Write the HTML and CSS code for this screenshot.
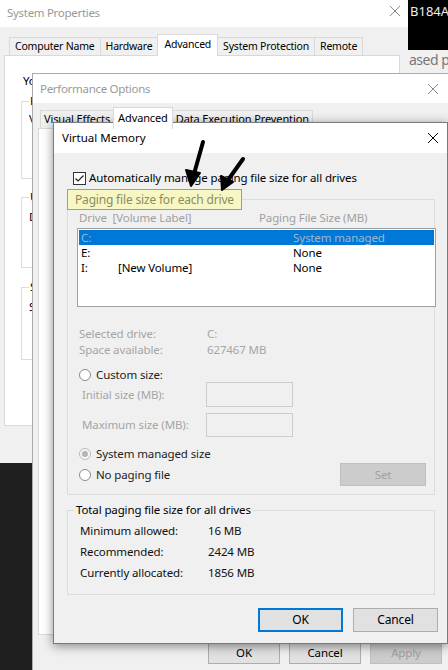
FILE: index.html
```html
<!DOCTYPE html>
<html>
<head>
<meta charset="utf-8">
<link rel="stylesheet" href="styles.css">
</head>
<body>
<div class="desktop">
  <div class="term">
    <div class="term-line">B184A9</div>
  </div>
  <div class="term-low">ased pr</div>

  <section class="win win-sys">
    <header class="titlebar">
      <span class="title">System Properties</span>
      <svg class="close" width="12" height="12" viewBox="0 0 12 12"><path d="M1 1L11 11M11 1L1 11" stroke="#8a8a8a" stroke-width="1"/></svg>
    </header>
    <div class="tabs sys-tabs">
      <span class="tab">Computer Name</span>
      <span class="tab">Hardware</span>
      <span class="tab active">Advanced</span>
      <span class="tab">System Protection</span>
      <span class="tab">Remote</span>
    </div>
    <div class="panel sys-panel">
      <p class="note">You must be logged on as an Administrator to make most of these changes.</p>
      <fieldset class="sgrp sg1"><legend>Performance</legend><p>Visual effects, processor scheduling, memory usage, and virtual memory</p></fieldset>
      <fieldset class="sgrp sg2"><legend>User Profiles</legend><p>Desktop settings related to your sign-in</p></fieldset>
      <fieldset class="sgrp sg3"><legend>Startup and Recovery</legend><p>System startup, system failure, and debugging information</p></fieldset>
    </div>
  </section>

  <section class="win win-perf">
    <header class="titlebar">
      <span class="title">Performance Options</span>
      <svg class="close" width="12" height="12" viewBox="0 0 12 12"><path d="M1 1L11 11M11 1L1 11" stroke="#8a8a8a" stroke-width="1"/></svg>
    </header>
    <div class="tabs perf-tabs">
      <span class="tab">Visual Effects</span>
      <span class="tab active">Advanced</span>
      <span class="tab">Data Execution Prevention</span>
    </div>
    <div class="panel perf-panel"></div>
    <div class="btnrow perf-btns">
      <span class="btn">OK</span>
      <span class="btn">Cancel</span>
      <span class="btn disabled">Apply</span>
    </div>
  </section>

  <section class="win win-vm">
    <header class="titlebar vm-title">
      <span class="title">Virtual Memory</span>
      <svg class="close" width="12" height="12" viewBox="0 0 12 12"><path d="M1 1L11 11M11 1L1 11" stroke="#000" stroke-width="1"/></svg>
    </header>
    <div class="vm-body">
      <label class="check-row">
        <svg class="checkbox" width="13" height="13" viewBox="0 0 13 13"><rect x="0.5" y="0.5" width="12" height="12" fill="#fff" stroke="#333"/><path d="M2.5 6.5L5 9L10.5 3.5" fill="none" stroke="#222" stroke-width="1.2"/></svg>
        <span>Automatically manage paging file size for all drives</span>
      </label>

      <fieldset class="grp grp-drive">
        <legend class="hl">Paging file size for each drive</legend>
        <div class="cols hdr"><span class="c1">Drive&nbsp; [Volume Label]</span><span class="c2">Paging File Size (MB)</span></div>
        <div class="listbox">
          <div class="lrow sel"><span class="d">C:</span><span class="v"></span><span class="s">System managed</span></div>
          <div class="lrow"><span class="d">E:</span><span class="v"></span><span class="s">None</span></div>
          <div class="lrow"><span class="d">I:</span><span class="v">[New Volume]</span><span class="s">None</span></div>
        </div>
        <div class="info first"><span class="k">Selected drive:</span><span>C:</span></div>
        <div class="info"><span class="k">Space available:</span><span>627467 MB</span></div>
        <div class="radio-row custom"><span class="radio"></span><span>Custom size:</span></div>
        <div class="size-row r1"><span class="k">Initial size (MB):</span><span class="tbox"></span></div>
        <div class="size-row r2"><span class="k">Maximum size (MB):</span><span class="tbox"></span></div>
        <div class="radio-row sysm"><span class="radio checked"></span><span>System managed size</span></div>
        <div class="last-row">
          <div class="radio-row nopf"><span class="radio"></span><span>No paging file</span></div>
          <span class="btn disabled set">Set</span>
        </div>
      </fieldset>

      <fieldset class="grp grp-total">
        <legend>Total paging file size for all drives</legend>
        <div class="trow"><span class="k">Minimum allowed:</span><span>16 MB</span></div>
        <div class="trow"><span class="k">Recommended:</span><span>2424 MB</span></div>
        <div class="trow"><span class="k">Currently allocated:</span><span>1856 MB</span></div>
      </fieldset>

      <div class="btnrow vm-btns">
        <span class="btn default">OK</span>
        <span class="btn">Cancel</span>
      </div>
    </div>
  </section>

  <svg class="arrows" width="448" height="670" viewBox="0 0 448 670">
    <path d="M203 142 L194 174" stroke="#000" stroke-width="4" stroke-linecap="round"/>
    <path d="M186 170 L191 186 L200 173 Z" fill="#000" stroke="#000" stroke-width="2" stroke-linejoin="round"/>
    <path d="M243 159 L228 180" stroke="#000" stroke-width="4" stroke-linecap="round"/>
    <path d="M221 176 L222 190 L233 182 Z" fill="#000" stroke="#000" stroke-width="2" stroke-linejoin="round"/>
  </svg>
</div>
</body>
</html>
```

FILE: styles.css
```css
* { box-sizing: border-box; }
html, body { margin: 0; padding: 0; }
body {
  width: 448px;
  height: 670px;
  overflow: hidden;
  background: #1e1e1e;
  font-family: "Noto Sans", "Open Sans", sans-serif;
  font-size: 11.5px;
  letter-spacing: -0.12px;
  line-height: 16px;
  color: #000;
}
.desktop { position: relative; width: 448px; height: 670px; overflow: hidden; }

.term {
  position: absolute; left: 408px; top: 0; width: 40px; height: 50px;
  background: #000; color: #eee; font-size: 13px; padding: 3px 0 0 2px;
  letter-spacing: 0;
}
.term-low {
  position: absolute; left: 404px; top: 50px; width: 44px; height: 24px;
  background: #f0f0f0; color: #777; font-size: 14px; padding: 2px 0 0 5px;
  letter-spacing: -0.5px; white-space: nowrap; overflow: hidden;
}

.win { position: absolute; background: #f0f0f0; }
.titlebar {
  background: #fff;
  display: flex; align-items: center; justify-content: space-between;
  color: #999;
  font-size: 11.5px;
  letter-spacing: -0.3px;
}
.titlebar .close { flex: none; }

/* System Properties */
.win-sys { left: 0; top: 0; width: 408px; height: 463px; }
.win-sys .titlebar { height: 27px; padding: 0 8px 2px 7px; }
.win-sys .titlebar .close { margin-right: -1px; margin-top: -4px; }
.tabs { display: flex; align-items: flex-end; }
.tab {
  background: #f0f0f0; border: 1px solid #d9d9d9; border-bottom: none;
  height: 18px; line-height: 16px; padding: 0 3px; margin-right: -1px; white-space: nowrap;
}
.tab.active { background: #fff; height: 22px; line-height: 19px; position: relative; z-index: 1; margin-bottom: -1px; padding: 0 4px; }
.sys-tabs { height: 28px; padding-left: 9px; font-size: 10.5px; letter-spacing: -0.2px; }
.sys-tabs .tab { padding: 0 5px; }
.sys-tabs .tab.active { padding: 0 6px; }
.sys-panel {
  background: #fff; border: 1px solid #d9d9d9;
  margin: 0 8px 0 4px; height: 371px; padding: 17px 0 0 16px;
}
.note { margin: 0 0 4px 2px; white-space: nowrap; }
.sgrp {
  border: 1px solid #dcdcdc; margin: 0 0 0 0; padding: 0 0 0 7px; width: 370px;
}
.sgrp legend { padding: 0 1px; margin-left: 0; }
.sgrp p { margin: 2px 0 0 0; white-space: nowrap; }
.sg1 { height: 86px; margin-top: 0; }
.sg2 { height: 79px; margin-top: 10px; }
.sg3 { height: 81px; margin-top: 11px; }
.sg2 p, .sg3 p { margin-top: 4px; }

/* Performance Options */
.win-perf { left: 32px; top: 73px; width: 425px; height: 610px; border: 1px solid #aaa; }
.win-perf .titlebar { height: 29px; padding: 0 17px 0 7px; }
.perf-tabs { height: 25px; padding-left: 7px; font-size: 11px; }
.perf-panel { background: #fff; border: 1px solid #d9d9d9; margin: 0 6px 0 5px; height: 507px; }
.btnrow { display: flex; justify-content: flex-end; }
.btn {
  display: inline-flex; align-items: center; justify-content: center;
  background: #e1e1e1; border: 1px solid #adadad; color: #000;
}
.btn.disabled { background: #cccccc; border-color: #bfbfbf; color: #a0a0a0; }
.perf-btns { margin-top: 6px; gap: 9px; padding-right: 14px; }
.perf-btns .btn { width: 72px; height: 23px; }

/* Virtual Memory */
.win-vm {
  left: 53px; top: 122px; width: 395px; height: 522px;
  border: 1px solid #7a7a7a;
  box-shadow: 0 2px 10px rgba(0,0,0,0.45);
}
.vm-title { height: 30px; padding: 0 8px 0 8px; color: #000; letter-spacing: 0; }
.vm-body { padding: 17px 12px 0 13px; }
.check-row { display: flex; align-items: center; height: 16px; padding-left: 6px; gap: 3px; }
.checkbox { flex: none; }

.grp { border: 1px solid #dcdcdc; margin: 0; min-width: 0; }
.grp-drive { margin-top: 3px; padding: 0 0 8px 11px; }
.hl {
  margin-left: -12px;
  background: #f7f7c4; border: 1px solid #a3a36e;
  color: #8c8c62; line-height: 19px; padding: 0 7px 0 7px;
  font-size: 12px; letter-spacing: -0.18px;
}
.cols { display: flex; color: #a0a0a0; line-height: 15px; height: 15px; }
.cols .c1 { width: 180px; }
.listbox {
  margin: 3px -2px 0 -2px; height: 79px; background: #fff;
  border: 1px solid #a0a0a0; padding: 1px;
}
.lrow { display: flex; height: 15px; line-height: 15px; padding-left: 2px; white-space: nowrap; }
.lrow .d { width: 37px; }
.lrow .v { width: 175px; }
.lrow.sel { background: #0078d7; color: #9fb7cc; }
.info { display: flex; color: #a5a5a5; height: 16px; }
.info.first { margin-top: 19px; }
.info .k { width: 128px; }
.radio-row { display: flex; align-items: center; height: 16px; gap: 5px; color: #222; }
.radio {
  width: 12px; height: 12px; border-radius: 50%; border: 1px solid #8a8a8a; background: #fff; flex: none;
  display: inline-flex; align-items: center; justify-content: center;
}
.radio.checked { border-color: #bcbcbc; background: #f5f5f5; }
.radio.checked::after { content: ""; width: 6px; height: 6px; border-radius: 50%; background: #b5b5b5; }
.custom { margin-top: 9px; }
.size-row { display: flex; align-items: center; color: #a5a5a5; padding-left: 3px; }
.size-row .k { width: 124px; }
.tbox { width: 87px; background: #f0f0f0; border: 1px solid #cccccc; }
.r1 { margin-top: -1px; height: 25px; }
.r1 .tbox { height: 25px; }
.r2 { margin-top: 6px; height: 24px; }
.r2 .tbox { height: 24px; }
.sysm { margin-top: 9px; }
.last-row { display: flex; align-items: center; justify-content: space-between; margin-top: 1px; height: 23px; padding-right: 8px; }
.set { width: 86px; height: 23px; }

.grp-total { margin-top: 7px; padding: 2px 0 11px 12px; }
.grp-total legend { margin-left: -6px; padding: 0 2px; }
.trow { display: flex; height: 21px; line-height: 21px; color: #111; }
.trow .k { width: 128px; }

.vm-btns { margin-top: 13px; gap: 10px; margin-right: -3px; }
.vm-btns .btn { width: 85px; height: 24px; font-size: 12px; }
.btn.default { border: 2px solid #0078d7; }

.arrows { position: absolute; left: 0; top: 0; pointer-events: none; }
```
